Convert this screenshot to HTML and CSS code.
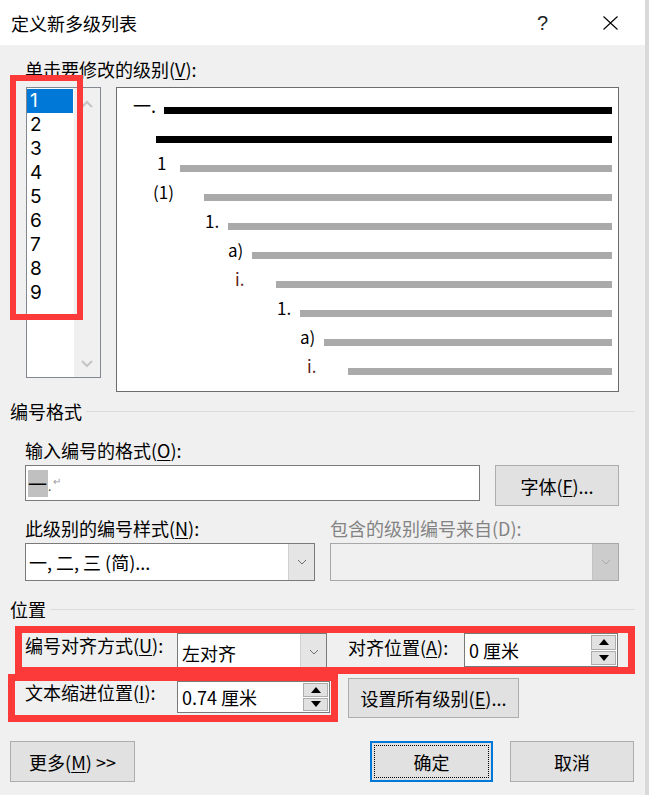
FILE: index.html
```html
<!DOCTYPE html>
<html lang="zh">
<head>
    <meta charset="UTF-8">
    <title>定义新多级列表</title>
    <link rel="stylesheet" href="styles.css">
</head>
<body>
    <div class="dialog">
        <div class="titlebar">
            <span class="title">定义新多级列表</span>
            <span class="help">?</span>
            <svg class="close" width="15" height="14" viewBox="0 0 15 14">
                <path d="M0.5 0.5 L14.5 13.5 M14.5 0.5 L0.5 13.5" stroke="#000" stroke-width="1.1" fill="none"/>
            </svg>
        </div>

        <div class="content">
            <div class="field-label">单击要修改的级别(<u>V</u>):</div>

            <div class="level-row">
                <div class="level-list">
                    <ul class="items">
                        <li class="selected">1</li>
                        <li>2</li>
                        <li>3</li>
                        <li>4</li>
                        <li>5</li>
                        <li>6</li>
                        <li>7</li>
                        <li>8</li>
                        <li>9</li>
                    </ul>
                    <div class="vscroll">
                        <svg width="12" height="8" viewBox="0 0 12 8"><path d="M1 7 L6 2 L11 7" stroke="#c4c4c4" stroke-width="2" fill="none"/></svg>
                        <svg width="12" height="8" viewBox="0 0 12 8"><path d="M1 1 L6 6 L11 1" stroke="#c4c4c4" stroke-width="2" fill="none"/></svg>
                    </div>
                </div>

                <div class="preview">
                    <div class="pv-row lv0"><span class="pv-num cn">一.</span><span class="bar black"></span></div>
                    <div class="pv-row lv1"><span class="bar black"></span></div>
                    <div class="pv-row lv2"><span class="pv-num">1</span><span class="bar"></span></div>
                    <div class="pv-row lv3"><span class="pv-num">(1)</span><span class="bar"></span></div>
                    <div class="pv-row lv4"><span class="pv-num">1.</span><span class="bar"></span></div>
                    <div class="pv-row lv5"><span class="pv-num">a)</span><span class="bar"></span></div>
                    <div class="pv-row lv6"><span class="pv-num roman">i.</span><span class="bar"></span></div>
                    <div class="pv-row lv7"><span class="pv-num">1.</span><span class="bar"></span></div>
                    <div class="pv-row lv8"><span class="pv-num">a)</span><span class="bar"></span></div>
                    <div class="pv-row lv9"><span class="pv-num roman">i.</span><span class="bar"></span></div>
                </div>
            </div>

            <div class="section"><span>编号格式</span><span class="rule"></span></div>

            <div class="field-label gap-15">输入编号的格式(<u>O</u>):</div>
            <div class="input-row">
                <div class="textbox"><span class="hl">一</span><span class="dot">.</span><span class="para">↵</span></div>
                <div class="btn btn-font">字体(<u>F</u>)...</div>
            </div>

            <div class="label-cols">
                <div class="col-left">此级别的编号样式(<u>N</u>):</div>
                <div class="col-right disabled">包含的级别编号来自(D):</div>
            </div>
            <div class="combo-row">
                <div class="combo combo-style">
                    <span class="combo-text">一, 二, 三 (简)...</span>
                    <span class="drop"><svg width="10" height="6" viewBox="0 0 10 6"><path d="M1 1 L5 5 L9 1" stroke="#6d6d6d" fill="none"/></svg></span>
                </div>
                <div class="combo combo-off">
                    <span class="combo-text"></span>
                    <span class="drop"><svg width="10" height="6" viewBox="0 0 10 6"><path d="M1 1 L5 5 L9 1" stroke="#a8a8a8" fill="none"/></svg></span>
                </div>
            </div>

            <div class="section pos"><span>位置</span><span class="rule"></span></div>

            <div class="pos-row row-a">
                <div class="pos-label">编号对齐方式(<u>U</u>):</div>
                <div class="combo combo-align">
                    <span class="combo-text">左对齐</span>
                    <span class="drop"><svg width="10" height="6" viewBox="0 0 10 6"><path d="M1 1 L5 5 L9 1" stroke="#6d6d6d" fill="none"/></svg></span>
                </div>
                <div class="pos-label at">对齐位置(<u>A</u>):</div>
                <div class="spin spin-at">
                    <span class="spin-text">0 厘米</span>
                    <span class="spin-btns">
                        <span class="spin-btn"><svg width="10" height="6" viewBox="0 0 10 6"><path d="M0 6 L5 0 L10 6 Z" fill="#000"/></svg></span>
                        <span class="spin-btn"><svg width="10" height="6" viewBox="0 0 10 6"><path d="M0 0 L5 6 L10 0 Z" fill="#000"/></svg></span>
                    </span>
                </div>
            </div>

            <div class="pos-row row-b">
                <div class="pos-label">文本缩进位置(<u>I</u>):</div>
                <div class="spin spin-indent">
                    <span class="spin-text">0.74 厘米</span>
                    <span class="spin-btns">
                        <span class="spin-btn"><svg width="10" height="6" viewBox="0 0 10 6"><path d="M0 6 L5 0 L10 6 Z" fill="#000"/></svg></span>
                        <span class="spin-btn"><svg width="10" height="6" viewBox="0 0 10 6"><path d="M0 0 L5 6 L10 0 Z" fill="#000"/></svg></span>
                    </span>
                </div>
                <div class="btn btn-all">设置所有级别(<u>E</u>)...</div>
            </div>

            <div class="footer">
                <div class="btn btn-more">更多(<u>M</u>) &gt;&gt;</div>
                <div class="btn btn-ok">确定</div>
                <div class="btn btn-cancel">取消</div>
            </div>
        </div>

        <!-- 红框标注 -->
        <div class="mark mark-list"></div>
        <div class="mark mark-align"></div>
        <div class="mark mark-indent"></div>
    </div>
</body>
</html>
```

FILE: styles.css
```css
* {
    margin: 0;
    padding: 0;
    box-sizing: border-box;
}

html, body {
    width: 649px;
    height: 795px;
    overflow: hidden;
    background: #f0f0f0;
}

body {
    font-family: "Noto Sans CJK SC", sans-serif;
    font-size: 18px;
    color: #000;
}

u {
    text-decoration: underline;
    text-underline-offset: 2px;
}

.dialog {
    position: relative;
    width: 649px;
    height: 795px;
    border-right: 4px solid #d9d9d9;
    background: #f0f0f0;
}

/* 标题栏 */
.titlebar {
    height: 45px;
    background: #fff;
    display: flex;
    align-items: center;
    padding-left: 11px;
}

.title {
    flex: 1;
    font-size: 18px;
    line-height: 24px;
}

.help {
    width: 9px;
    font-family: "Liberation Sans", sans-serif;
    font-size: 20px;
    line-height: 24px;
    color: #222;
}

.close {
    margin-left: 57px;
    margin-right: 27px;
}

.content {
    padding: 0 10px;
}

.field-label {
    margin-top: 12px;
    padding-left: 15px;
    line-height: 24px;
}

.field-label.gap-15 {
    margin-top: 15px;
}

/* 级别列表 + 预览 */
.level-row {
    display: flex;
    align-items: flex-start;
    margin-top: 6px;
}

.level-list {
    display: flex;
    width: 75px;
    height: 291px;
    margin-left: 16px;
    border: 1px solid #828790;
    background: #fff;
}

.items {
    list-style: none;
    width: 47px;
    padding-top: 1px;
    background: #fff;
}

.items li {
    height: 24px;
    line-height: 24px;
    font-family: Inter, "Liberation Sans", sans-serif;
    font-size: 19px;
    padding-left: 3px;
    width: 46px;
}

.items li.selected {
    background: #0078d7;
    color: #fff;
}

.vscroll {
    flex: 1;
    background: #f0f0f0;
    display: flex;
    flex-direction: column;
    justify-content: space-between;
    align-items: center;
    padding: 12px 0 9px;
}

.preview {
    width: 503px;
    height: 305px;
    margin-left: 15px;
    border: 1px solid #6d6d6d;
    background: #fff;
    padding: 1px 6px 0 0;
}

.pv-row {
    display: flex;
    align-items: flex-end;
    height: 29px;
}

.pv-num {
    font-size: 17px;
    line-height: 16px;
    margin-bottom: 5px;
    white-space: nowrap;
}

.pv-num.cn {
    font-size: 18px;
}

.pv-num.roman {
    color: #5c1a1a;
}

.bar {
    flex: 1;
    height: 7px;
    margin-bottom: 4px;
    background: #aaaaaa;
}

.bar.black {
    background: #000;
}

.lv0 { padding-left: 16px; }
.lv0 .pv-num { width: 31px; }
.lv1 { padding-left: 39px; }
.lv2 { padding-left: 40px; }
.lv2 .pv-num { width: 23px; }
.lv3 { padding-left: 36px; }
.lv3 .pv-num { width: 51px; }
.lv4 { padding-left: 88px; }
.lv4 .pv-num { width: 23px; }
.lv5 { padding-left: 111px; }
.lv5 .pv-num { width: 24px; }
.lv6 { padding-left: 118px; }
.lv6 .pv-num { width: 41px; }
.lv7 { padding-left: 160px; }
.lv7 .pv-num { width: 23px; }
.lv8 { padding-left: 183px; }
.lv8 .pv-num { width: 24px; }
.lv9 { padding-left: 190px; }
.lv9 .pv-num { width: 41px; }

/* 分组标题 */
.section {
    display: flex;
    align-items: center;
    gap: 4px;
    margin-top: 7px;
    line-height: 24px;
}

.section .rule {
    flex: 1;
    height: 1px;
    background: #dcdcdc;
}

.section.pos {
    margin-top: 16px;
}

/* 编号格式 */
.input-row {
    display: flex;
    align-items: flex-start;
    margin-top: 3px;
    padding-left: 15px;
}

.textbox {
    width: 455px;
    height: 36px;
    border: 1px solid #7a7a7a;
    background: #fff;
    display: flex;
    align-items: center;
    padding-left: 2px;
}

.textbox .hl {
    background: #c0c0c0;
    line-height: 27px;
    height: 27px;
    width: 20px;
    font-size: 19px;
}

.textbox .dot {
    font-size: 12px;
    line-height: 16px;
    margin-top: 6px;
    color: #444;
}

.textbox .para {
    font-size: 10px;
    color: #999;
    margin-left: 2px;
    margin-top: -6px;
}

.btn {
    background: #e1e1e1;
    border: 1px solid #adadad;
    display: flex;
    align-items: center;
    justify-content: center;
    line-height: 24px;
}

.btn-font {
    width: 124px;
    height: 41px;
    margin-left: 15px;
}

.label-cols {
    display: flex;
    margin-top: 10px;
    padding-left: 15px;
    line-height: 24px;
}

.col-left {
    width: 305px;
}

.disabled {
    color: #838383;
}

.combo-row {
    display: flex;
    margin-top: 3px;
    padding-left: 15px;
    gap: 15px;
}

.combo {
    display: flex;
    height: 38px;
    border: 1px solid #7a7a7a;
    background: #fff;
}

.combo-text {
    flex: 1;
    line-height: 36px;
    padding-left: 3px;
    white-space: nowrap;
}

.drop {
    width: 26px;
    background: #e5e5e5;
    border-left: 1px solid #d0d0d0;
    display: flex;
    align-items: center;
    justify-content: center;
}

.combo-style {
    width: 290px;
}

.combo-off {
    width: 289px;
    background: #f0f0f0;
    border-color: #a8a8a8;
}

.combo-off .drop {
    background: #cccccc;
    border-left-color: #c4c4c4;
}

/* 位置 */
.pos-row {
    display: flex;
    align-items: flex-start;
    padding-left: 15px;
}

.row-a {
    margin-top: 12px;
    height: 38px;
}

.row-b {
    margin-top: 7px;
    height: 40px;
}

.pos-label {
    width: 152px;
    line-height: 24px;
    white-space: nowrap;
}

.row-b .pos-label {
    margin-top: 2px;
}

.pos-label.at {
    width: 116px;
    margin-left: 21px;
    margin-top: 2px;
}

.combo-align {
    width: 150px;
}

.combo-align .combo-text {
    line-height: 38px;
    padding-left: 4px;
}

.spin {
    display: flex;
    border: 1px solid #7a7a7a;
    background: #fff;
}

.spin-text {
    flex: 1;
    padding-left: 4px;
    white-space: nowrap;
}

.spin-btns {
    width: 26px;
    display: flex;
    flex-direction: column;
    gap: 1px;
    padding: 1px 1px 1px 0;
}

.spin-btn {
    flex: 1;
    background: #e1e1e1;
    border: 1px solid #adadad;
    display: flex;
    align-items: center;
    justify-content: center;
}

.spin-at {
    width: 154px;
    height: 34px;
}

.spin-at .spin-text {
    line-height: 32px;
}

.spin-indent {
    width: 153px;
    height: 32px;
    margin-top: 3px;
}

.spin-indent .spin-text {
    line-height: 30px;
}

.btn-all {
    width: 171px;
    height: 40px;
    margin-left: 18px;
}

/* 底部按钮 */
.footer {
    display: flex;
    margin-top: 23px;
    height: 41px;
}

.btn-more {
    width: 125px;
}

.btn-ok {
    width: 123px;
    margin-left: auto;
    border: 2px solid #0078d7;
    outline: 1px dotted #000;
    outline-offset: -5px;
}

.btn-cancel {
    width: 124px;
    margin-left: 17px;
    margin-right: 1px;
}

/* 红框标注 */
.mark {
    position: absolute;
    border: 7px solid #fd3a3a;
    pointer-events: none;
}

.mark-list {
    left: 10px;
    top: 75px;
    width: 73px;
    height: 245px;
    border-width: 6px;
}

.mark-align {
    left: 15px;
    top: 626px;
    width: 620px;
    height: 48px;
}

.mark-indent {
    left: 8px;
    top: 674px;
    width: 330px;
    height: 48px;
}
```
